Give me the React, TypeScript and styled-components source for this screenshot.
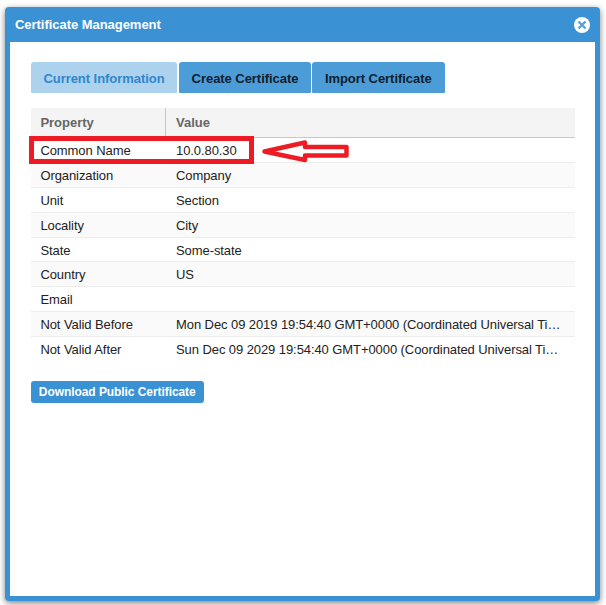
import React from "react";
import styled, { createGlobalStyle } from "styled-components";

const GlobalStyle = createGlobalStyle`
  * { box-sizing: border-box; }
  body {
    margin: 0;
    background: #fff;
    font-family: "Liberation Sans", Arial, sans-serif;
    font-size: 13px;
    color: #222;
  }
`;

const Page = styled.main`
  position: relative;
  height: 605px;
  padding: 7px 6px 4px 5px;
  overflow: hidden;
`;

const Dialog = styled.section`
  display: flex;
  flex-direction: column;
  height: 594px;
  padding: 0 5px 5px;
  background: #3a92d4;
  border-radius: 4px;
  box-shadow: 0 2px 6px rgba(0, 0, 0, 0.5);
`;

const TitleBar = styled.header`
  display: flex;
  flex: none;
  align-items: center;
  justify-content: space-between;
  height: 35px;
  padding: 0 5px;
`;

const Title = styled.h1`
  margin: 0;
  color: #fff;
  font-size: 13px;
  line-height: 16px;
  letter-spacing: -0.04px;
`;

const CloseButton = styled.button`
  display: flex;
  padding: 0;
  border: 0;
  background: none;
`;

const Content = styled.div`
  flex: 1;
  padding: 20px 20px 0 21px;
  background: #fff;
`;

const Tabs = styled.nav`
  display: flex;
  gap: 1px;
  height: 31px;
`;

const Tab = styled.button<{ $active?: boolean; $width: number }>`
  width: ${(p) => p.$width}px;
  margin-right: ${(p) => (p.$active ? 1 : 0)}px;
  padding: 2px 0 0;
  border: 0;
  border-radius: 3px 3px 1px 1px;
  background: ${(p) => (p.$active ? "#add2ed" : "#4b9cd7")};
  color: ${(p) => (p.$active ? "#2e86cd" : "#10202c")};
  font: bold 13px "Liberation Sans", Arial, sans-serif;
  letter-spacing: -0.05px;
  white-space: nowrap;
`;

const Table = styled.div`
  width: 544px;
  margin-top: 15px;
`;

const HeadRow = styled.div`
  display: grid;
  grid-template-columns: 135px 1fr;
  height: 30px;
  border-bottom: 1px solid #c8c8c8;
  background: #f4f4f4;
  color: #666;
  font-weight: bold;
  line-height: 29px;
`;

const HeadCell = styled.div<{ $divided?: boolean }>`
  padding-left: ${(p) => (p.$divided ? 9.4 : 10)}px;
  border-right: ${(p) => (p.$divided ? "1px solid #c5c5c5" : "0")};
`;

const Row = styled.div`
  display: grid;
  grid-template-columns: 135px 1fr;
  height: 24.9px;
  border-bottom: 1px solid #ededed;
  line-height: 25.6px;
  &:nth-child(odd) { background: #fafafa; }
  &:last-child { border-bottom: 0; }
`;

const Cell = styled.div`
  padding-left: 10px;
  white-space: nowrap;
  letter-spacing: -0.08px;
  &:first-child { padding-left: 9.4px; }
`;

const Download = styled.button`
  display: block;
  width: 172.5px;
  height: 22px;
  margin-top: 19px;
  padding: 0;
  border: 0;
  border-radius: 3px;
  background: #3a92d4;
  color: #fff;
  font: bold 12px "Liberation Sans", Arial, sans-serif;
  letter-spacing: -0.07px;
  white-space: nowrap;
`;

const Highlight = styled.div`
  position: absolute;
  left: 29px;
  top: 136px;
  width: 225px;
  height: 28px;
  border: 5px solid #ed1c24;
`;

const Arrow = styled.svg`
  position: absolute;
  left: 260px;
  top: 138px;
`;

const rows = [
  ["Common Name", "10.0.80.30"],
  ["Organization", "Company"],
  ["Unit", "Section"],
  ["Locality", "City"],
  ["State", "Some-state"],
  ["Country", "US"],
  ["Email", ""],
  ["Not Valid Before", "Mon Dec 09 2019 19:54:40 GMT+0000 (Coordinated Universal Ti…"],
  ["Not Valid After", "Sun Dec 09 2029 19:54:40 GMT+0000 (Coordinated Universal Ti…"],
];

export default function App() {
  return (
    <Page>
      <GlobalStyle />
      <Dialog>
        <TitleBar>
          <Title>Certificate Management</Title>
          <CloseButton aria-label="Close">
            <svg width="16" height="16" viewBox="0 0 16 16">
              <circle cx="8" cy="8" r="8" fill="#fff" />
              <path d="M4.5 4.5 11.5 11.5M11.5 4.5 4.5 11.5" stroke="#55a1da" strokeWidth="2.3" />
            </svg>
          </CloseButton>
        </TitleBar>
        <Content>
          <Tabs>
            <Tab $active $width={146}>Current Information</Tab>
            <Tab $width={132}>Create Certificate</Tab>
            <Tab $width={132.5}>Import Certificate</Tab>
          </Tabs>
          <Table>
            <HeadRow>
              <HeadCell $divided>Property</HeadCell>
              <HeadCell>Value</HeadCell>
            </HeadRow>
            {rows.map(([name, value]) => (
              <Row key={name}>
                <Cell>{name}</Cell>
                <Cell>{value}</Cell>
              </Row>
            ))}
          </Table>
          <Download>Download Public Certificate</Download>
        </Content>
      </Dialog>
      <Highlight />
      <Arrow width="92" height="26" viewBox="0 0 92 26">
        <path
          d="M4.5 13.5 45 4.5V9H86.500V17.500H45V22Z"
          fill="#fff"
          stroke="#ed1c24"
          strokeWidth="4.5"
          strokeLinejoin="round"
        />
      </Arrow>
    </Page>
  );
}
